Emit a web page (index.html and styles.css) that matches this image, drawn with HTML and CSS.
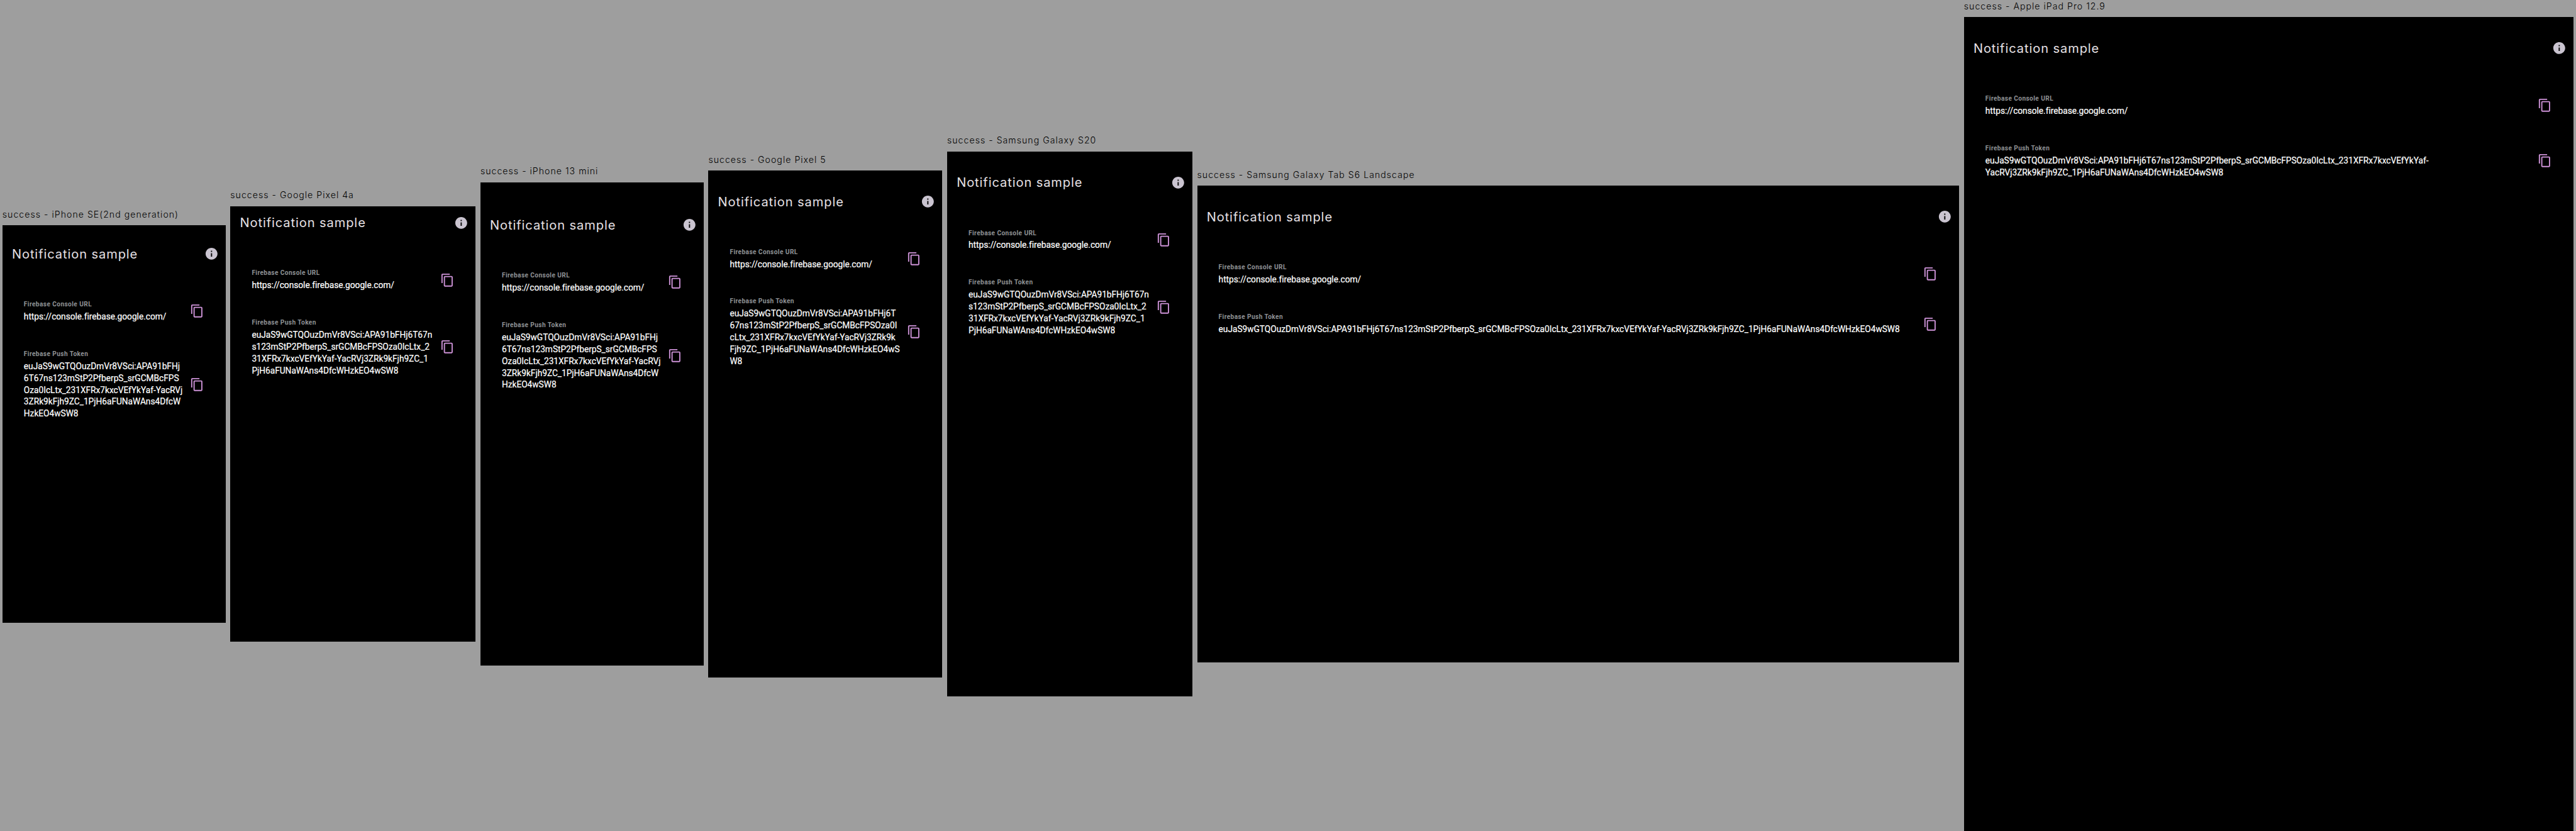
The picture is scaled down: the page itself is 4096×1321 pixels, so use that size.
FILE: index.html
```html
<!DOCTYPE html>
<html lang="en">
<head>
<meta charset="utf-8">
<title>Notification sample - device previews</title>
<link rel="stylesheet" href="styles.css">
</head>
<body>
<svg class="sprite" aria-hidden="true">
  <symbol id="info" viewBox="0 0 24 24"><path d="M12 2C6.48 2 2 6.48 2 12s4.48 10 10 10 10-4.48 10-10S17.52 2 12 2zm1 15h-2v-6h2v6zm0-8h-2V7h2v2z"/></symbol>
  <symbol id="copy" viewBox="0 0 24 24"><path d="M16 1H4c-1.1 0-2 .9-2 2v14h2V3h12V1zm3 4H8c-1.1 0-2 .9-2 2v14c0 1.1.9 2 2 2h11c1.1 0 2-.9 2-2V7c0-1.1-.9-2-2-2zm0 16H8V7h11v14z"/></symbol>
</svg>
<main class="board">

  <section class="device">
    <h2 class="device-name">success - iPhone SE(2nd generation)</h2>
    <div class="screen iphone-se">
      <header class="app-bar"><h1 class="title">Notification sample</h1><svg class="icon info"><use href="#info"/></svg></header>
      <div class="item"><div class="text"><div class="label">Firebase Console URL</div><div class="value">https://console.firebase.google.com/</div></div><svg class="icon copy"><use href="#copy"/></svg></div>
      <div class="item"><div class="text"><div class="label">Firebase Push Token</div><div class="value">euJaS9wGTQOuzDmVr8VSci:APA91bFHj<br>6T67ns123mStP2PfberpS_srGCMBcFPS<br>Oza0IcLtx_231XFRx7kxcVEfYkYaf-YacRVj<br>3ZRk9kFjh9ZC_1PjH6aFUNaWAns4DfcW<br>HzkEO4wSW8</div></div><svg class="icon copy"><use href="#copy"/></svg></div>
    </div>
  </section>

  <section class="device">
    <h2 class="device-name">success - Google Pixel 4a</h2>
    <div class="screen pixel-4a">
      <header class="app-bar"><h1 class="title">Notification sample</h1><svg class="icon info"><use href="#info"/></svg></header>
      <div class="item"><div class="text"><div class="label">Firebase Console URL</div><div class="value">https://console.firebase.google.com/</div></div><svg class="icon copy"><use href="#copy"/></svg></div>
      <div class="item"><div class="text"><div class="label">Firebase Push Token</div><div class="value">euJaS9wGTQOuzDmVr8VSci:APA91bFHj6T67n<br>s123mStP2PfberpS_srGCMBcFPSOza0IcLtx_2<br>31XFRx7kxcVEfYkYaf-YacRVj3ZRk9kFjh9ZC_1<br>PjH6aFUNaWAns4DfcWHzkEO4wSW8</div></div><svg class="icon copy"><use href="#copy"/></svg></div>
    </div>
  </section>

  <section class="device">
    <h2 class="device-name">success - iPhone 13 mini</h2>
    <div class="screen iphone-13-mini">
      <header class="app-bar"><h1 class="title">Notification sample</h1><svg class="icon info"><use href="#info"/></svg></header>
      <div class="item"><div class="text"><div class="label">Firebase Console URL</div><div class="value">https://console.firebase.google.com/</div></div><svg class="icon copy"><use href="#copy"/></svg></div>
      <div class="item"><div class="text"><div class="label">Firebase Push Token</div><div class="value">euJaS9wGTQOuzDmVr8VSci:APA91bFHj<br>6T67ns123mStP2PfberpS_srGCMBcFPS<br>Oza0IcLtx_231XFRx7kxcVEfYkYaf-YacRVj<br>3ZRk9kFjh9ZC_1PjH6aFUNaWAns4DfcW<br>HzkEO4wSW8</div></div><svg class="icon copy"><use href="#copy"/></svg></div>
    </div>
  </section>

  <section class="device">
    <h2 class="device-name">success - Google Pixel 5</h2>
    <div class="screen pixel-5">
      <header class="app-bar"><h1 class="title">Notification sample</h1><svg class="icon info"><use href="#info"/></svg></header>
      <div class="item"><div class="text"><div class="label">Firebase Console URL</div><div class="value">https://console.firebase.google.com/</div></div><svg class="icon copy"><use href="#copy"/></svg></div>
      <div class="item"><div class="text"><div class="label">Firebase Push Token</div><div class="value">euJaS9wGTQOuzDmVr8VSci:APA91bFHj6T<br>67ns123mStP2PfberpS_srGCMBcFPSOza0I<br>cLtx_231XFRx7kxcVEfYkYaf-YacRVj3ZRk9k<br>Fjh9ZC_1PjH6aFUNaWAns4DfcWHzkEO4wS<br>W8</div></div><svg class="icon copy"><use href="#copy"/></svg></div>
    </div>
  </section>

  <section class="device">
    <h2 class="device-name">success - Samsung Galaxy S20</h2>
    <div class="screen galaxy-s20">
      <header class="app-bar"><h1 class="title">Notification sample</h1><svg class="icon info"><use href="#info"/></svg></header>
      <div class="item"><div class="text"><div class="label">Firebase Console URL</div><div class="value">https://console.firebase.google.com/</div></div><svg class="icon copy"><use href="#copy"/></svg></div>
      <div class="item"><div class="text"><div class="label">Firebase Push Token</div><div class="value">euJaS9wGTQOuzDmVr8VSci:APA91bFHj6T67n<br>s123mStP2PfberpS_srGCMBcFPSOza0IcLtx_2<br>31XFRx7kxcVEfYkYaf-YacRVj3ZRk9kFjh9ZC_1<br>PjH6aFUNaWAns4DfcWHzkEO4wSW8</div></div><svg class="icon copy"><use href="#copy"/></svg></div>
    </div>
  </section>

  <section class="device">
    <h2 class="device-name">success - Samsung Galaxy Tab S6 Landscape</h2>
    <div class="screen galaxy-tab">
      <header class="app-bar"><h1 class="title">Notification sample</h1><svg class="icon info"><use href="#info"/></svg></header>
      <div class="item"><div class="text"><div class="label">Firebase Console URL</div><div class="value">https://console.firebase.google.com/</div></div><svg class="icon copy"><use href="#copy"/></svg></div>
      <div class="item"><div class="text"><div class="label">Firebase Push Token</div><div class="value">euJaS9wGTQOuzDmVr8VSci:APA91bFHj6T67ns123mStP2PfberpS_srGCMBcFPSOza0IcLtx_231XFRx7kxcVEfYkYaf-YacRVj3ZRk9kFjh9ZC_1PjH6aFUNaWAns4DfcWHzkEO4wSW8</div></div><svg class="icon copy"><use href="#copy"/></svg></div>
    </div>
  </section>

  <section class="device">
    <h2 class="device-name">success - Apple iPad Pro 12.9</h2>
    <div class="screen ipad-pro">
      <header class="app-bar"><h1 class="title">Notification sample</h1><svg class="icon info"><use href="#info"/></svg></header>
      <div class="item"><div class="text"><div class="label">Firebase Console URL</div><div class="value">https://console.firebase.google.com/</div></div><svg class="icon copy"><use href="#copy"/></svg></div>
      <div class="item"><div class="text"><div class="label">Firebase Push Token</div><div class="value">euJaS9wGTQOuzDmVr8VSci:APA91bFHj6T67ns123mStP2PfberpS_srGCMBcFPSOza0IcLtx_231XFRx7kxcVEfYkYaf-<br>YacRVj3ZRk9kFjh9ZC_1PjH6aFUNaWAns4DfcWHzkEO4wSW8</div></div><svg class="icon copy"><use href="#copy"/></svg></div>
    </div>
  </section>

</main>
</body>
</html>
```
FILE: styles.css
```css
/* 1rem = 100 device units; the board is 4327 units wide */
html {
  font-size: calc(100vw / 43.27);
}

body {
  margin: 0;
  background: #9e9e9e;
  overflow: hidden;
}

.sprite {
  display: none;
}

.board {
  display: flex;
  align-items: center;
  gap: 0.08rem;
  box-sizing: border-box;
  height: 13.95rem;
  padding: 0 0.04rem;
}

.device {
  flex: none;
}

.device-name {
  width: 0;
  height: 0.29rem;
  margin: 0;
  font: 300 0.149rem/0.215rem Inter, sans-serif;
  letter-spacing: 0.0109rem;
  white-space: nowrap;
  color: #000;
}

.screen {
  box-sizing: border-box;
  padding-top: 0.24rem;
  background: #000;
}

.iphone-se { width: 3.75rem; height: 6.67rem; padding-top: 0.2rem; }
.pixel-4a { width: 4.12rem; height: 7.32rem; padding-top: 0; }
.iphone-13-mini { width: 3.75rem; height: 8.12rem; padding-top: 0.44rem; }
.pixel-5 { width: 3.93rem; height: 8.51rem; }
.galaxy-s20 { width: 4.12rem; height: 9.15rem; }
.galaxy-tab { width: 12.8rem; height: 8rem; }
.ipad-pro { width: 10.24rem; height: 13.66rem; }

.app-bar {
  display: flex;
  align-items: center;
  justify-content: space-between;
  height: 0.56rem;
  margin-bottom: 0.265rem;
  padding: 0 0.12rem 0 0.16rem;
}

.galaxy-tab .item + .item {
  margin-top: 0.01rem;
}

.title {
  margin: 0;
  padding-top: 0.01rem;
  font: 400 0.212rem/0.28rem Inter, sans-serif;
  letter-spacing: 0.0097rem;
  color: #e6e1e5;
}

.icon {
  flex: none;
  width: 0.24rem;
  height: 0.24rem;
}

.info { fill: #cac4d0; }
.copy { fill: #ce93d8; }

.item {
  display: flex;
  align-items: center;
  justify-content: space-between;
  padding: 0.22rem 0.36rem;
}

.label {
  height: 0.19rem;
  font: 700 0.107rem/0.16rem Roboto, sans-serif;
  letter-spacing: 0.0045rem;
  color: #8f9295;
}

.value {
  font: 400 0.145rem/0.2rem Roboto, sans-serif;
  letter-spacing: -0.0002rem;
  -webkit-text-stroke: 0.2px #fff;
  white-space: nowrap;
  color: #fff;
}
```
